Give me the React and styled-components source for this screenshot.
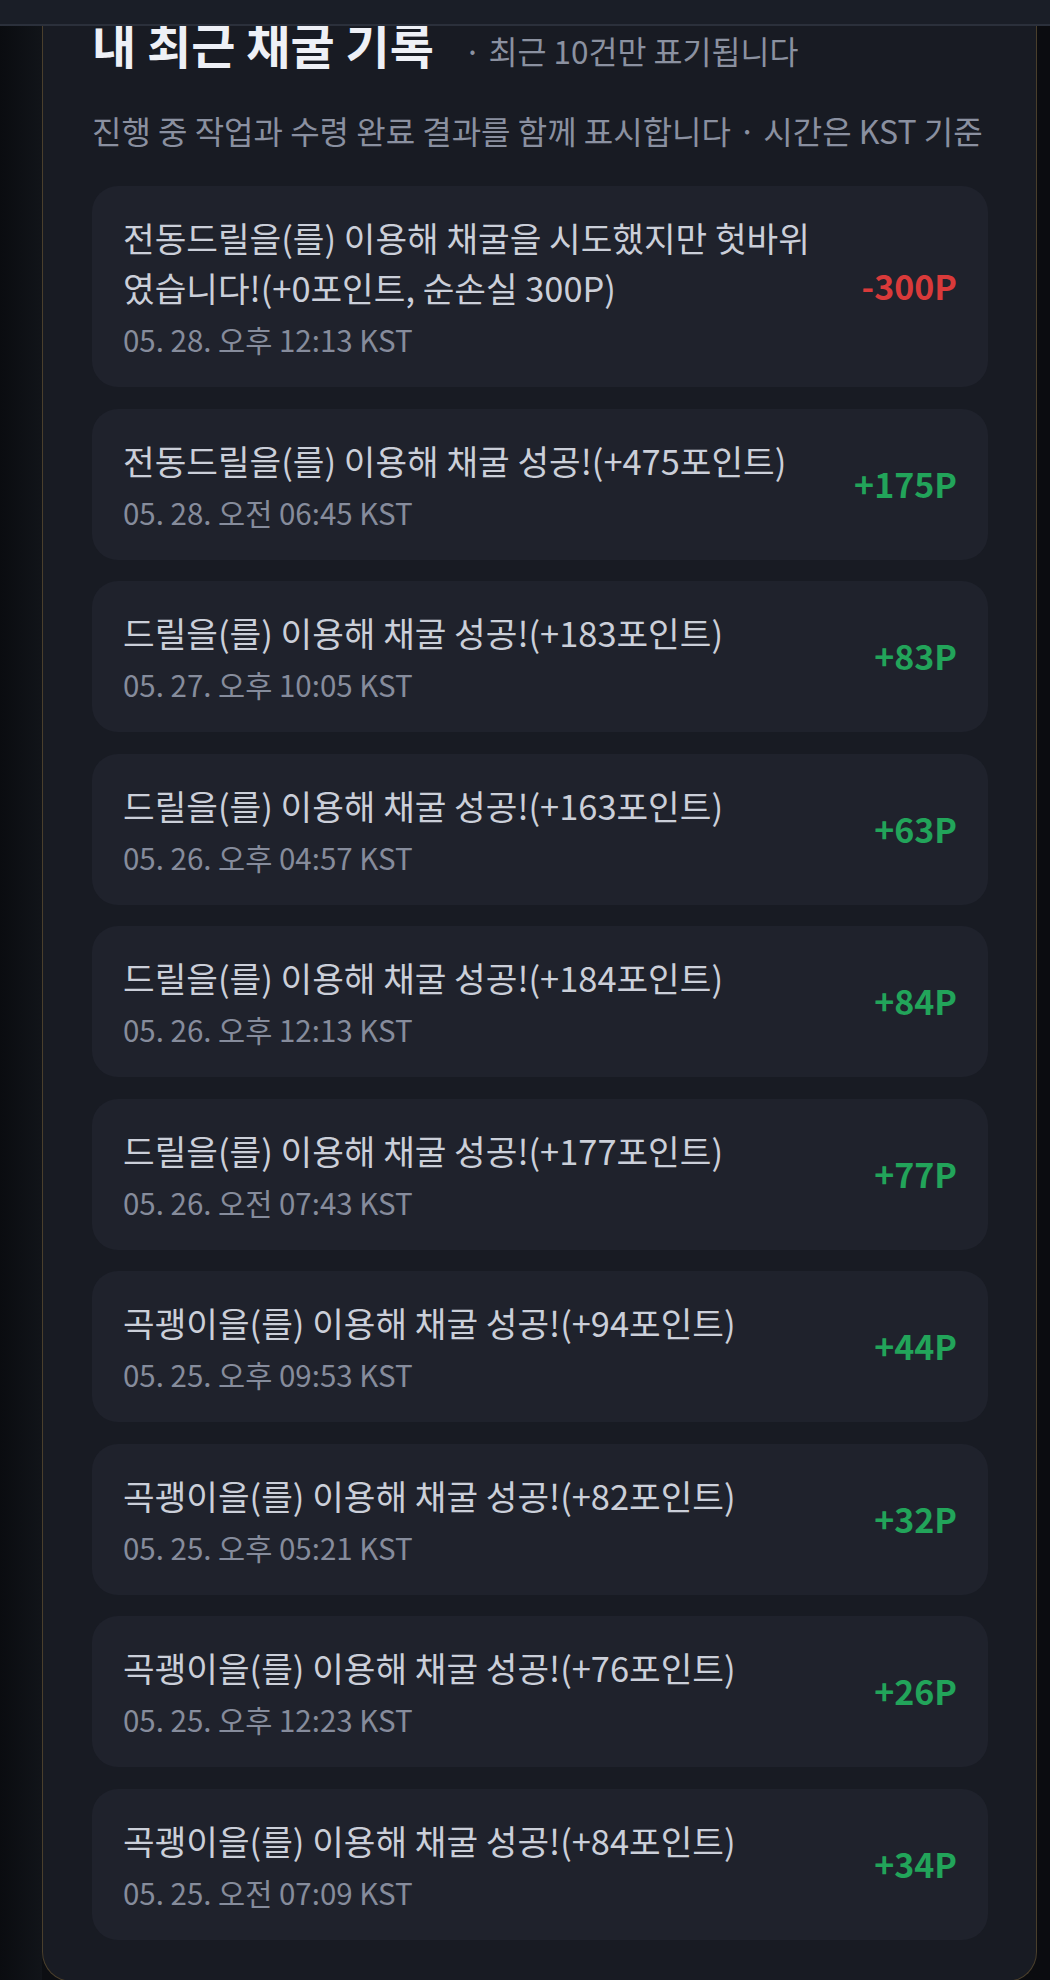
import React from "react";
import styled, { createGlobalStyle } from "styled-components";

const GlobalStyle = createGlobalStyle`
  html, body {
    margin: 0;
    padding: 0;
    background: #0c0e12;
  }
  body {
    font-family: "Noto Sans CJK KR", "Noto Sans", sans-serif;
    -webkit-font-smoothing: antialiased;
  }
  * { box-sizing: border-box; }
`;

const TopBar = styled.header`
  position: fixed;
  top: 0;
  left: 0;
  right: 0;
  height: 26px;
  background: #1a1e27;
  border-bottom: 2px solid #2b303b;
  z-index: 10;
`;

const Page = styled.div`
  min-height: 1980px;
  padding: 0 13px 0 42px;
  background: linear-gradient(90deg, #0a0c10 0%, #111419 4%, #0c0e12 4.01%, #0b0c10 100%);
`;

const Panel = styled.section`
  background: #181b23;
  border: 1px solid #4a3f2c;
  border-top: none;
  border-radius: 0 0 30px 30px;
  padding: 15px 48px 41px 49px;
`;

const TitleRow = styled.div`
  display: flex;
  align-items: baseline;
  gap: 30px;
`;

const Title = styled.h2`
  margin: 0;
  font-size: 48px;
  line-height: 56px;
  font-weight: 700;
  color: #eef0f6;
`;

const TitleNote = styled.span`
  font-size: 31.5px;
  color: #8b91a0;
`;

const Description = styled.p`
  margin: 33px 0 32px;
  font-size: 32px;
  line-height: 48px;
  color: #8a90a0;
`;

const List = styled.ul`
  list-style: none;
  margin: 0;
  padding: 0;
  display: flex;
  flex-direction: column;
  gap: 21.5px;
`;

const Card = styled.li`
  display: flex;
  align-items: center;
  gap: 32px;
  background: #1f222c;
  border-radius: 26px;
  padding: 26px 31px 28px 31px;
`;

const Body = styled.div`
  flex: 1;
  min-width: 0;
  display: flex;
  flex-direction: column;
  gap: 7px;
`;

const Message = styled.div`
  font-size: 34.4px;
  line-height: 50px;
  color: #cbcfd9;
`;

const Time = styled.div`
  font-size: 29.5px;
  line-height: 40px;
  color: #868c9c;
`;

const Amount = styled.div`
  flex: none;
  font-size: 34px;
  font-weight: 700;
  color: ${(p) => (p.$negative ? "#d93a3a" : "#22a45a")};
`;

const records = [
  { msg: "전동드릴을(를) 이용해 채굴을 시도했지만 헛바위였습니다!(+0포인트, 순손실 300P)", time: "05. 28. 오후 12:13 KST", amount: "-300P" },
  { msg: "전동드릴을(를) 이용해 채굴 성공!(+475포인트)", time: "05. 28. 오전 06:45 KST", amount: "+175P" },
  { msg: "드릴을(를) 이용해 채굴 성공!(+183포인트)", time: "05. 27. 오후 10:05 KST", amount: "+83P" },
  { msg: "드릴을(를) 이용해 채굴 성공!(+163포인트)", time: "05. 26. 오후 04:57 KST", amount: "+63P" },
  { msg: "드릴을(를) 이용해 채굴 성공!(+184포인트)", time: "05. 26. 오후 12:13 KST", amount: "+84P" },
  { msg: "드릴을(를) 이용해 채굴 성공!(+177포인트)", time: "05. 26. 오전 07:43 KST", amount: "+77P" },
  { msg: "곡괭이을(를) 이용해 채굴 성공!(+94포인트)", time: "05. 25. 오후 09:53 KST", amount: "+44P" },
  { msg: "곡괭이을(를) 이용해 채굴 성공!(+82포인트)", time: "05. 25. 오후 05:21 KST", amount: "+32P" },
  { msg: "곡괭이을(를) 이용해 채굴 성공!(+76포인트)", time: "05. 25. 오후 12:23 KST", amount: "+26P" },
  { msg: "곡괭이을(를) 이용해 채굴 성공!(+84포인트)", time: "05. 25. 오전 07:09 KST", amount: "+34P" },
];

export default function App() {
  return (
    <>
      <GlobalStyle />
      <TopBar />
      <Page>
        <Panel>
          <TitleRow>
            <Title>내 최근 채굴 기록</Title>
            <TitleNote>· 최근 10건만 표기됩니다</TitleNote>
          </TitleRow>
          <Description>진행 중 작업과 수령 완료 결과를 함께 표시합니다 · 시간은 KST 기준</Description>
          <List>
            {records.map((r, i) => (
              <Card key={i}>
                <Body>
                  <Message>{r.msg}</Message>
                  <Time>{r.time}</Time>
                </Body>
                <Amount $negative={r.amount.startsWith("-")}>{r.amount}</Amount>
              </Card>
            ))}
          </List>
        </Panel>
      </Page>
    </>
  );
}
